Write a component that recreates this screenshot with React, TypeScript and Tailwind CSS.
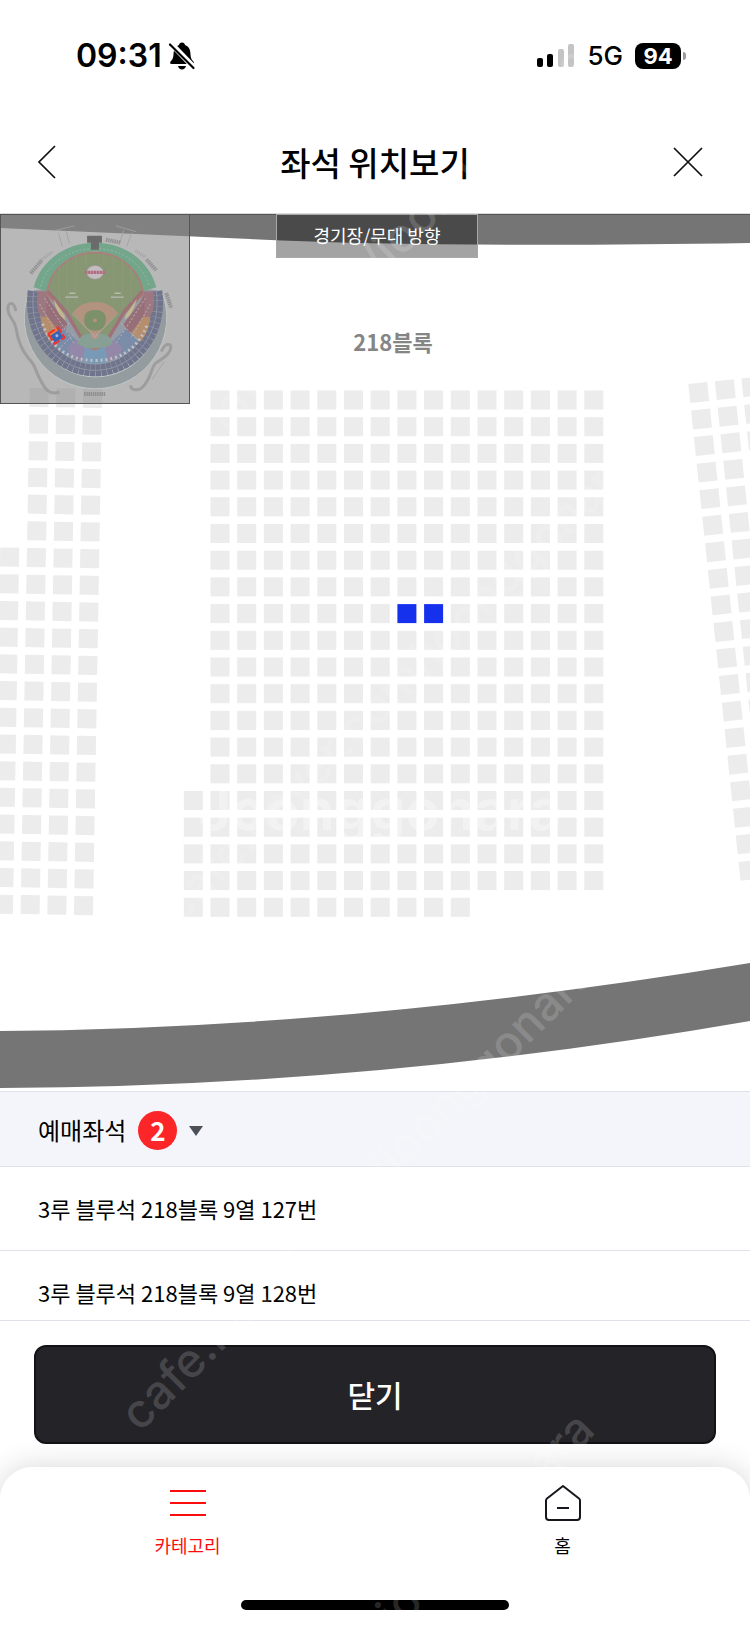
import React from 'react';

interface Seat {
  x: number;
  y: number;
  booked?: boolean;
}

const PITCH = 26.7;
const SEAT = 19;

const bookedSeats = ['3루 블루석 218블록 9열 127번', '3루 블루석 218블록 9열 128번'];

// seats of one row, from column `from` up to column `to`
function row(r: number, from: number, to: number): Seat[] {
  const seats: Seat[] = [];
  for (let c = from; c <= to; c++) {
    seats.push({ x: c * PITCH, y: r * PITCH });
  }
  return seats;
}

function rows(first: number, last: number, from: number, to: number): Seat[] {
  const seats: Seat[] = [];
  for (let r = first; r <= last; r++) {
    seats.push(...row(r, from, to));
  }
  return seats;
}

const centerBlock: Seat[] = [...rows(0, 14, 0, 14), ...rows(15, 18, -1, 14), ...row(19, -1, 9)].map((s) => ({
  ...s,
  booked: s.y === 8 * PITCH && (s.x === 7 * PITCH || s.x === 8 * PITCH),
}));
const leftBlock: Seat[] = [...rows(-1, 18, 0, 2), ...rows(5, 18, -1, -1)];
const rightBlock: Seat[] = rows(0, 18, 0, 2);

function SeatBlock({ seats, transform }: { seats: Seat[]; transform: string }) {
  return (
    <g transform={transform}>
      {seats.map((s) => (
        <rect
          key={`${s.x}-${s.y}`}
          x={s.x}
          y={s.y}
          width={SEAT}
          height={SEAT}
          fill={s.booked ? '#1631ee' : '#ececec'}
        />
      ))}
    </g>
  );
}

function StatusBar() {
  return (
    <div className="flex h-28 items-center justify-between pr-16 pl-[76px] font-['Inter',sans-serif] text-black">
      <div className="flex items-center gap-1.5">
        <span className="text-[32px] leading-10 font-semibold">09:31</span>
        <svg className="h-7 w-7" viewBox="0 0 28 28" fill="currentColor" aria-hidden="true">
          <path d="M14 0.5c1.700 0 2.800 1 3 2.500 3.600 1.200 5.200 4 5.400 8 .2 4.500.9 6.300 2.800 8.200 1.200 1.300.9 2.800-.9 2.800H3.700c-1.800 0-2.100-1.500-.9-2.800C4.700 17.300 5.400 15.500 5.600 11c.2-4 1.800-6.800 5.400-8 .2-1.500 1.300-2.500 3-2.500zM10 24h8c-.5 2.200-2 3.500-4 3.500S10.500 26.200 10 24z" />
          <path d="M2.500 1 26.500 26" stroke="#fff" strokeWidth="5.500" />
          <path d="M2 2.500 25.500 26" stroke="currentColor" strokeWidth="2.200" strokeLinecap="round" />
        </svg>
      </div>
      <div className="flex items-center">
        <svg className="mr-3 h-6 w-[38px]" viewBox="0 0 38 24" aria-hidden="true">
          <rect x="0" y="14" width="6" height="9" rx="2" />
          <rect x="10" y="10" width="6" height="13" rx="2" />
          <rect x="21" y="5" width="6" height="18" rx="2" fill="#c4c4c4" />
          <rect x="31" y="0" width="6" height="23" rx="2" fill="#c4c4c4" />
        </svg>
        <span className="mr-3 text-[26px] leading-8 font-medium">5G</span>
        <span className="flex h-[26px] w-[46px] items-center justify-center rounded-lg bg-black text-[22px] leading-6 font-bold text-white">
          94
        </span>
        <span className="ml-0.5 h-2 w-[3px] rounded-r-full bg-[#9a9a9a]" />
      </div>
    </div>
  );
}

function Header() {
  return (
    <header className="flex h-[102px] items-center justify-between border-b border-[#dcdcdc] px-8 pb-0.5">
      <button type="button" aria-label="뒤로" className="flex h-10 w-10 items-center">
        <svg className="h-9 w-9" viewBox="0 0 36 36" fill="none" stroke="#111" strokeWidth="1.700">
          <path d="M23 2 7 18l16 16" />
        </svg>
      </button>
      <h1 className="text-[33px] leading-[50px] font-medium text-black">좌석 위치보기</h1>
      <button type="button" aria-label="닫기" className="flex h-10 w-10 items-center justify-end">
        <svg className="mr-3.5 h-8 w-8 shrink-0" viewBox="0 0 32 32" fill="none" stroke="#111" strokeWidth="1.700">
          <path d="M2 2l28 28M30 2 2 30" />
        </svg>
      </button>
    </header>
  );
}

function MiniMap() {
  return (
    <svg viewBox="0 0 190 190" className="block w-full opacity-85" aria-hidden="true">
      {/* ramps and buildings around the stadium */}
      <g fill="none" stroke="#999" strokeWidth="3">
        <path d="M15 97c-2-12-9-8-8-1 1 8 6 9 8 18 2 12 5 22 13 31 8 8 6 12 12 22 5 10 9 15 19 12" />
        <path d="M172 132c-1 10-8 12-16 18-5 6-4 16-14 25-5 3-11 2-11-3M172 132c-5-3-8 1-10 6" />
      </g>
      <g fill="none" stroke="#a2a2a2" strokeWidth="1">
        <path d="M53 16l21-5M58 18l4 14M66 16l3 13M116 11l21 6M124 15l-4 14M132 18l-5 14M153 166l12-18" />
      </g>
      <g stroke="#8b8b8b" strokeWidth="4" strokeDasharray="1.500 0.700">
        <path d="M30 59l11-13M147 45l10 11M167 79l5 15M106 25l15 3M84 181h22" />
      </g>
      <g stroke="#a0a0a0" strokeWidth="3" strokeDasharray="1 1">
        <path d="M41 45l11-8M136 36l10 7" />
      </g>

      {/* outer ring */}
      <path d="M29 76A72 72 0 1 0 162 76L155 76A64 64 0 1 1 36 76Z" fill="#8e989b" stroke="#c4c8c8" strokeWidth="1" />
      <path d="M33 76A65 65 0 1 0 158 76L95 70Z" fill="#9098a2" />
      <path d="M33 77A62 62 0 1 0 157 77" fill="none" stroke="#8e989b" strokeWidth="8" />
      <path d="M33 77C27 120 56 157 95 157S163 120 157 77" fill="none" stroke="#646985" strokeWidth="12" strokeDasharray="5 0.500" />
      <path d="M33 77C27 120 56 157 95 157S163 120 157 77" fill="none" stroke="#8b90a4" strokeWidth="1" />

      {/* infield stands */}
      <path d="M37 77c-2 14 0 19 4 27l14-2-9-25z" fill="#996d77" />
      <path d="M154 77c2 14 0 19-4 27l-14-2 9-25z" fill="#996d77" />
      <path d="M40 103l12-1 9 15-11 11c-6-7-9-15-10-25z" fill="#b58762" />
      <path d="M151 103l-12-1-9 15 11 11c6-7 9-15 10-25z" fill="#b58762" />
      <path d="M46 82l21 28-4 14-17-23z" fill="#92636f" />
      <path d="M145 82l-21 28 4 14 17-23z" fill="#92636f" />
      <path d="M64 115l20 19-2 13c-12-2-22-8-31-19z" fill="#7185a6" />
      <path d="M126 115l-20 19 2 13c12-2 22-8 31-19z" fill="#7185a6" />
      <path d="M67 135l8-9 10 9-2 13c-7-1-12-4-16-13zM123 135l-8-9-10 9 2 13c7-1 12-4 16-13z" fill="#8d80a5" />
      <path d="M85 134h20l3 14c-8 3-18 3-26 0z" fill="#6f95b7" />
      <path d="M39 90l20 35M44 84l30 46M151 90l-20 35M146 84l-30 46M53 125l18-18M61 133l13-13M137 125l-18-18" stroke="#b9b2b8" strokeWidth="1" strokeDasharray="2 2" />
      <path d="M42 110c8 22 24 37 53 37s45-15 53-37" fill="none" stroke="#c4c4cc" strokeWidth="3" strokeDasharray="2 3" />

      {/* outfield stand */}
      <path d="M33 73C40 47 64 28 95 28s55 19 62 45l-13 4c-4-20-24-40-49-40S50 57 46 77Z" fill="#67a384" />
      <path d="M40 72c7-23 28-38 55-38s48 15 55 38" fill="none" stroke="#8fb9a3" strokeWidth="1" strokeDasharray="2 2" />

      {/* field */}
      <path d="M47 75C52 53 72 38 95 38s43 15 48 37v6l-19 19-20 32-9 4-9-4-20-32L47 81Z" fill="#7f9168" stroke="#a6776f" strokeWidth="2" />
      <path d="M47 77l18 20 16 27M143 77l-18 20-16 27" fill="none" stroke="#9b6670" strokeWidth="3.500" />
      <path d="M53 85l11 16 1 5c-7-4-10-12-12-21zM137 85l-11 16-1 5c7-4 10-12 12-21z" fill="#c2b887" />
      <path d="M80 124c3-6 27-6 30 0l3 6c-9 6-27 6-36 0z" fill="#7f9b8f" />
      <path d="M72 99c6-8 14-11 23-11s17 3 23 11l-23 25Z" fill="#b08d76" />
      <path d="M95 96q11 0 11 10t-11 11q-11-1-11-11t11-10Z" fill="#728b5c" />
      <circle cx="95" cy="106.500" r="2" fill="#b08d76" />
      <circle cx="95" cy="122" r="3.500" fill="#b9907b" />
      <path d="M95 123 72 100M95 123l23-23" stroke="#bbb" strokeWidth="0.500" />
      <path d="M59 50v38M67 44v48M76 41v48M86 39v12M104 39v12M114 41v48M123 44v48M132 50v38" stroke="#86966e" strokeWidth="1" />
      <path d="M65 83h13M111 83h13M69 79h6M115 79h6" stroke="#b7beae" strokeWidth="1.500" />
      <ellipse cx="95" cy="58" rx="8.500" ry="7" fill="#c5bfc2" stroke="#9e8d94" strokeWidth="0.700" />
      <path d="M85 58h20" stroke="#b45f7a" strokeWidth="3.500" strokeDasharray="2.500 0.500" />
      <path d="M87 21h15v7h-3v7h-8v-7h-4z" fill="#5e5e5e" />

      {/* current block */}
      <g transform="rotate(-32 56 122)">
        <rect x="51" y="117" width="10" height="10" fill="#2454b5" />
        <path d="M51 117h9" stroke="#ff7a1a" strokeWidth="3" />
        <rect x="50" y="116" width="12" height="12" fill="none" stroke="#f81b1b" strokeWidth="2" strokeDasharray="8 2" />
      </g>
      <circle cx="56.500" cy="122" r="1.500" fill="#9cbcf0" />
    </svg>
  );
}

function SeatMap() {
  return (
    <section className="relative overflow-hidden bg-white" aria-label="좌석 배치도">
      <svg viewBox="0 214 750 877" className="block w-full">
        <SeatBlock seats={leftBlock} transform="translate(29.300 414.500) rotate(1)" />
        <SeatBlock seats={centerBlock} transform="translate(210.500 390.500)" />
        <SeatBlock seats={rightBlock} transform="translate(688.300 384) rotate(-6)" />
        <path d="M0 214H750V243Q440 248 250 239L0 228Z" fill="#757575" />
        <path d="M0 214.500H750" stroke="#555" strokeWidth="1" />
        <path d="M0 1031Q350 1029 750 963V1021Q370 1087 0 1088Z" fill="#757575" />
        <text
          x="393"
          y="351"
          textAnchor="middle"
          fill="#858585"
          className="font-['Noto_Sans_CJK_KR',sans-serif] text-[22px] font-bold"
        >
          218블록
        </text>
      </svg>
      <div className="absolute top-0 left-0 w-[190px] border border-[#555] bg-[#898989]/60">
        <MiniMap />
      </div>
      <div className="absolute inset-x-0 top-0 flex justify-center">
        <span className="ml-1 border border-[#a8a8a8] bg-black/36 px-9 pt-1.5 pb-2 text-lg leading-7 text-white">
          경기장/무대 방향
        </span>
      </div>
    </section>
  );
}

function BookedList() {
  return (
    <section>
      <button
        type="button"
        aria-expanded="true"
        className="flex h-[76px] w-full items-center border-y border-[#dfe1ea] bg-[#f4f5fa] px-[38px] pt-0.5"
      >
        <span className="text-2xl leading-9 text-black">예매좌석</span>
        <span className="ml-3 flex h-[39px] w-[39px] items-center justify-center rounded-full bg-[#fc2528] text-[26px] leading-9 font-bold text-white">
          2
        </span>
        <svg className="mt-0.5 ml-3 h-[10px] w-[14px]" viewBox="0 0 14 10" fill="#4b4f57" aria-hidden="true">
          <path d="M0 0h14L7 10z" />
        </svg>
      </button>
      <ul className="h-[154px] overflow-hidden border-b border-[#dfe1ea]">
        {bookedSeats.map((seat) => (
          <li
            key={seat}
            className="flex h-[84px] items-center border-b border-[#dfe1ea] px-[38px] pb-0.5 text-[22px] leading-8 text-black"
          >
            {seat}
          </li>
        ))}
      </ul>
    </section>
  );
}

function BottomNav() {
  return (
    <nav className="flex flex-1 flex-col rounded-t-[32px] bg-white shadow-[0_0_30px_rgba(0,0,0,0.16)]">
      <div className="grid grid-cols-2 pt-[18px] text-lg leading-7">
        <a href="#category" className="flex flex-col items-center gap-2.5 text-[#fb0d0d]">
          <svg className="h-9 w-9" viewBox="0 0 36 36" stroke="currentColor" strokeWidth="2" aria-hidden="true">
            <path d="M0 6h36M0 18h36M0 30h36" />
          </svg>
          카테고리
        </a>
        <a href="#home" className="flex flex-col items-center gap-2.5 text-black">
          <svg
            className="h-9 w-9"
            viewBox="0 0 36 36"
            fill="none"
            stroke="#15171c"
            strokeWidth="2"
            strokeLinejoin="round"
            aria-hidden="true"
          >
            <path d="M18 1 34 13.500Q35 14.300 35 15.500V32q0 3-3 3H4q-3 0-3-3V15.500Q1 14.300 2 13.500Z" />
            <path d="M12 23h12" />
          </svg>
          홈
        </a>
      </div>
      <div className="mx-auto mt-auto mb-4 h-[10px] w-[268px] rounded-full bg-black" />
    </nav>
  );
}

function Watermark() {
  const url = 'cafe.naver.com/joonggonara';
  return (
    <svg
      viewBox="0 0 750 1626"
      className="pointer-events-none absolute inset-0 h-full w-full font-['Inter',sans-serif] text-[47px] font-medium"
      fill="#fff"
      fillOpacity="0.17"
      aria-hidden="true"
    >
      <text transform="translate(140 1433) rotate(-45)">{url}</text>
      <text transform="translate(597 1432) rotate(-45)" textAnchor="end">joonggonara</text>
      <text transform="translate(593 66) rotate(-45)" textAnchor="end">{url}</text>
      <text transform="translate(180 925) rotate(-45)">{url}</text>
      <text x="380" y="830" textAnchor="middle" fillOpacity="0.3" className="text-[56px] font-bold">
        Joonggonara
      </text>
    </svg>
  );
}

export default function App() {
  return (
    <div className="relative flex min-h-screen flex-col overflow-hidden bg-white font-['Noto_Sans_CJK_KR',sans-serif]">
      <StatusBar />
      <Header />
      <SeatMap />
      <BookedList />
      <div className="px-[34px] pt-6 pb-[23px]">
        <button
          type="button"
          className="h-[99px] w-full rounded-xl border-2 border-[#131216] bg-[#242328] pb-0.5 text-[30px] leading-10 font-medium text-white"
        >
          닫기
        </button>
      </div>
      <BottomNav />
      <Watermark />
    </div>
  );
}
